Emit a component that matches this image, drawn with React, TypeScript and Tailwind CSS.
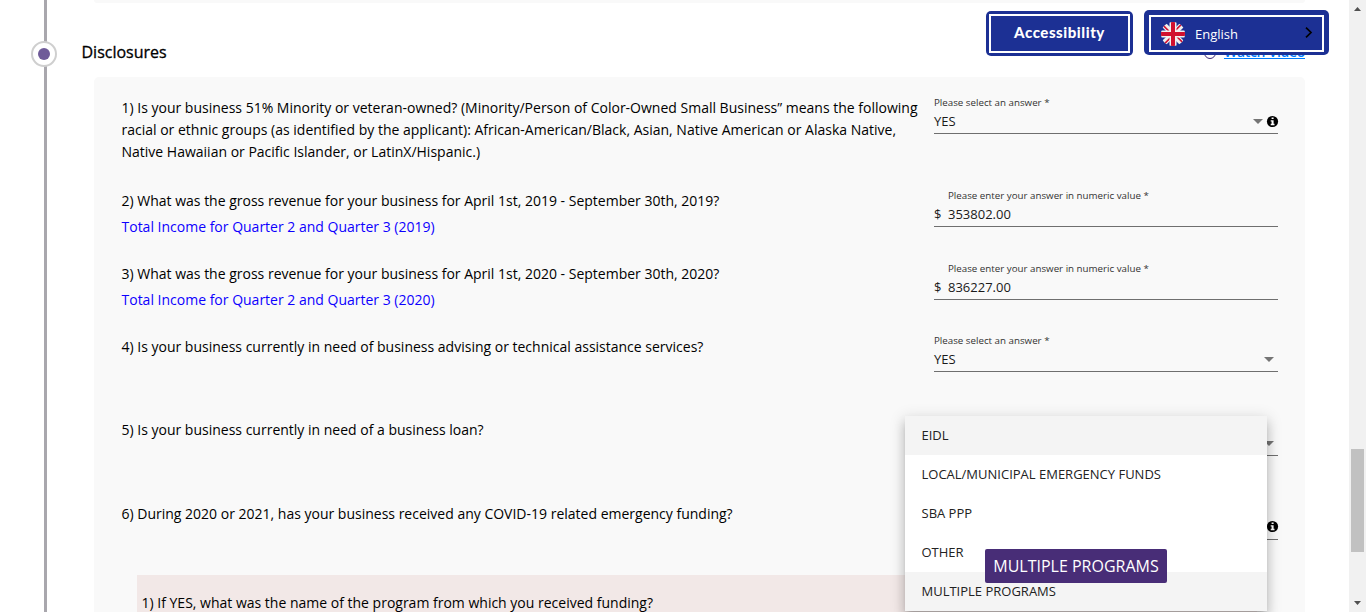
import React from "react";

function Caret({ className = "" }: { className?: string }) {
  return (
    <svg className={`h-[5px] w-[10px] shrink-0 ${className}`} viewBox="0 0 10 5">
      <path d="M0 0h10L5 5z" fill="#757575" />
    </svg>
  );
}

function InfoIcon() {
  return (
    <svg className="h-[11px] w-[11px] shrink-0 overflow-visible" viewBox="0 0 11 11">
      <circle cx="5.5" cy="5.5" r="5.6" fill="#000" />
      <path d="M4.6 1.4h2v1.7h-2zM3.7 4.2h2.9v3.5h.9v1.5H3.7V7.700h.9V5.600h-.9z" fill="#fff" />
    </svg>
  );
}

type FieldProps = {
  label: string;
  value?: string;
  money?: boolean;
  info?: boolean;
  short?: boolean;
};

function Field({ label, value, money, info, short }: FieldProps) {
  return (
    <div
      className={`flex w-[344px] shrink-0 flex-col border-b border-[#6f6f6f] ${short ? "h-[36px]" : "h-[37px]"}`}
    >
      <div
        className={`flex h-[11px] items-center text-[9.75px] leading-[11px] text-[#333] ${short ? "-mt-px" : ""} ${money ? "pl-[14px]" : ""}`}
      >
        <span className="whitespace-nowrap">{label} *</span>
      </div>
      <div className="mt-[4px] flex h-[18px] items-center text-[13px] text-[#1a1a1a]">
        {money && <span className="w-[14px]">$</span>}
        <span className="flex-1">{value}</span>
        {!money && <Caret className="mr-[4px]" />}
        {info && <InfoIcon />}
      </div>
    </div>
  );
}

type RowProps = {
  text: string;
  link?: string;
  height: string;
  field: React.ReactNode;
};

function Row({ text, link, height, field }: RowProps) {
  return (
    <div className={`flex ${height}`}>
      <div className="w-[812.5px] shrink-0 pr-2">
        <p>{text}</p>
        {link && <p className="mt-1 text-[#0d00ff]">{link}</p>}
      </div>
      {field}
    </div>
  );
}

/* Stands in for a select whose text lies beneath the open menu. */
function CoveredField({ info }: { info?: boolean }) {
  return (
    <div
      className={`flex h-[37px] w-[344px] shrink-0 items-center justify-end border-b border-[#6f6f6f] ${info ? "pt-[10px]" : "pt-[12px]"}`}
    >
      <Caret className="mr-[4px]" />
      {info && <InfoIcon />}
    </div>
  );
}

function Flag() {
  return (
    <svg className="h-6 w-6" viewBox="0 0 24 24">
      <defs>
        <clipPath id="round">
          <circle cx="12" cy="12" r="12" />
        </clipPath>
      </defs>
      <g clipPath="url(#round)">
        <rect width="24" height="24" fill="#1c3094" />
        <path d="M0 0l24 24M24 0L0 24" stroke="#f0f0f0" strokeWidth="5.6" />
        <path d="M2.400 3.600l7 7M14.600 13.400l7 7M20.400 2.400l-7 7M10.600 14.600l-7 7" stroke="#d1102f" strokeWidth="1.5" />
        <path d="M12 0v24M0 12h24" stroke="#f0f0f0" strokeWidth="7" />
        <path d="M12 0v24M0 12h24" stroke="#d1102f" strokeWidth="4" />
      </g>
    </svg>
  );
}

const options = ["EIDL", "LOCAL/MUNICIPAL EMERGENCY FUNDS", "SBA PPP", "OTHER", "MULTIPLE PROGRAMS"];

export default function App() {
  return (
    <div className="relative flex h-[612px] w-[1366px] overflow-hidden bg-white font-['Open_Sans',sans-serif] text-black">
      <div className="relative ml-[31px] flex w-[26px] shrink-0 justify-center">
        <div className="h-full w-[3px] translate-x-[1px] bg-[#a9a7ad]" />
        <div className="absolute top-[41px] left-0 flex h-[26px] w-[26px] items-center justify-center rounded-full border-2 border-[#cfcfcf] bg-white">
          <div className="h-3 w-3 rounded-full bg-[#6f5b99]" />
        </div>
      </div>

      <main className="flex w-[1248px] shrink-0 flex-col">
        <div className="ml-[37px] h-[3px] shrink-0 rounded-b-[5px] bg-[#f9f9f9]" />
        <div className="flex h-[74px] shrink-0 justify-between pt-[38px] pl-[24.5px]">
          <h2 className="text-[16px] leading-[22px] [-webkit-text-stroke:0.3px_black]">Disclosures</h2>
          <div className="flex h-[20px] items-center gap-[8px]">
            <div className="h-3 w-3 translate-y-[2px] rounded-full border border-[#3f2a78]" />
            <a className="translate-y-px text-[14px] leading-5 font-semibold tracking-[-0.3px] text-[#007bff] underline">
              Watch Video
            </a>
          </div>
        </div>

        <section className="ml-[37px] flex h-[600px] w-[1211px] shrink-0 flex-col rounded-t-[5px] bg-[#f9f9f9] pt-5 pl-[27.5px] text-[14px] leading-[22px]">
          <Row
            height="h-[93px]"
            text="1) Is your business 51% Minority or veteran-owned? (Minority/Person of Color-Owned Small Business” means the following racial or ethnic groups (as identified by the applicant): African-American/Black, Asian, Native American or Alaska Native, Native Hawaiian or Pacific Islander, or LatinX/Hispanic.)"
            field={<Field label="Please select an answer" value="YES" info />}
          />
          <Row
            height="h-[73px]"
            text="2) What was the gross revenue for your business for April 1st, 2019 - September 30th, 2019?"
            link="Total Income for Quarter 2 and Quarter 3 (2019)"
            field={<Field label="Please enter your answer in numeric value" value="353802.00" money />}
          />
          <Row
            height="h-[73px]"
            text="3) What was the gross revenue for your business for April 1st, 2020 - September 30th, 2020?"
            link="Total Income for Quarter 2 and Quarter 3 (2020)"
            field={<Field label="Please enter your answer in numeric value" value="836227.00" money />}
          />
          <Row
            height="h-[83px]"
            text="4) Is your business currently in need of business advising or technical assistance services?"
            field={<Field label="Please select an answer" value="YES" short />}
          />
          <Row
            height="h-[84px]"
            text="5) Is your business currently in need of a business loan?"
            field={<CoveredField />}
          />
          <Row
            height="h-[72px]"
            text="6) During 2020 or 2021, has your business received any COVID-19 related emergency funding?"
            field={<CoveredField info />}
          />
          <div className="ml-[15.5px] w-[1120px] flex-1 bg-[#f2e8e7] pt-[17px] pl-[4.5px]">
            <p>1) If YES, what was the name of the program from which you received funding?</p>
          </div>
        </section>
      </main>

      <aside className="ml-auto flex w-[17px] shrink-0 flex-col items-center bg-[#f1f1f1]">
        <svg className="mt-[7px] h-1 w-[7px] shrink-0" viewBox="0 0 7 4">
          <path d="M0 4h7L3.5 0z" fill="#505050" />
        </svg>
        <div className="mt-[438px] h-[103px] w-[13px] shrink-0 bg-[#c1c1c1]" />
        <svg className="mt-[49px] h-1 w-[7px] shrink-0" viewBox="0 0 7 4">
          <path d="M0 0h7L3.5 4z" fill="#505050" />
        </svg>
      </aside>

      <button className="absolute top-[11px] left-[986px] h-[45px] w-[147px] rounded-[5px] bg-[#1c3094] p-[3px]">
        <span className="flex h-full items-center justify-center border-2 border-white pb-[2px] font-['Lato',sans-serif] text-[15px] font-black tracking-[0.55px] text-white">
          Accessibility
        </span>
      </button>
      <button className="absolute top-[10px] left-[1144px] h-[45px] w-[185px] rounded-[5px] bg-[#1c3094] px-[5px] pt-[5px] pb-[3px]">
        <span className="flex h-full items-center border-2 border-white pl-[10px] text-[13px] text-white">
          <Flag />
          <span className="ml-[10px] flex-1 pt-[2px] text-left">English</span>
          <svg className="mr-[9px] mb-[2px] h-[11px] w-[8px]" viewBox="0 0 8 11">
            <path d="M1 .7l5 4.8-5 4.8" fill="none" stroke="#000" strokeWidth="1.7" />
          </svg>
        </span>
      </button>

      <ul className="absolute top-[416px] left-[905px] w-[362px] bg-white text-[13px] text-[#222] shadow-[0_5px_5px_-3px_rgba(0,0,0,0.2),0_8px_10px_1px_rgba(0,0,0,0.14),0_3px_14px_2px_rgba(0,0,0,0.12)]">
        {options.map((o, i) => (
          <li
            key={o}
            className={`flex h-[39px] items-center pl-[16.5px] ${i === 0 || i === 4 ? "bg-[#f4f4f4]" : ""}`}
          >
            {o}
          </li>
        ))}
      </ul>
      <div className="absolute top-[549px] left-[985px] flex h-[34px] w-[182px] items-center justify-center rounded-[2px] bg-[#482d77] text-[16px] whitespace-nowrap text-white">
        MULTIPLE PROGRAMS
      </div>
    </div>
  );
}
